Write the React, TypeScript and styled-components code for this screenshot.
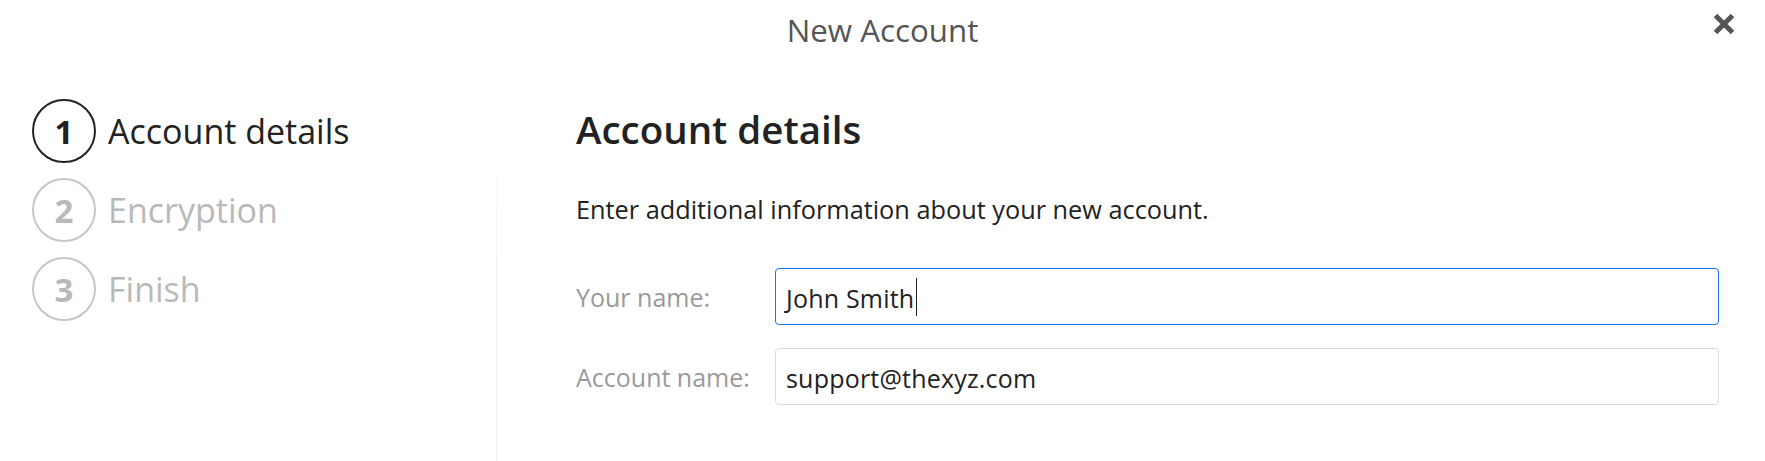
import React from "react";
import styled, { createGlobalStyle } from "styled-components";

const Global = createGlobalStyle`
  html, body { margin: 0; padding: 0; background: #ffffff; }
  body { font-family: "Open Sans", "Noto Sans", "Liberation Sans", sans-serif; color: #222; }
  * { box-sizing: border-box; }
`;

const Page = styled.div`
  width: 1765px;
  height: 461px;
  display: flex;
  flex-direction: column;
  background: #fff;
  overflow: hidden;
`;

const Header = styled.header`
  height: 60px;
  display: grid;
  grid-template-columns: 1fr auto 1fr;
  flex: none;
`;

const Title = styled.h1`
  grid-column: 2;
  margin: 0;
  font-size: 31.3px;
  font-weight: 400;
  line-height: 60px;
  color: #555;
`;

const CloseButton = styled.button`
  grid-column: 3;
  justify-self: end;
  align-self: start;
  margin: 13px 30px 0 0;
  padding: 0;
  width: 22px;
  height: 22px;
  border: none;
  background: transparent;
  display: flex;
  cursor: pointer;
`;

const Body = styled.div`
  flex: 1;
  display: grid;
  grid-template-columns: 497px 1fr;
`;

const Sidebar = styled.nav`
  padding: 39px 0 0 32px;
  display: flex;
  flex-direction: column;
  gap: 15px;
  background: linear-gradient(
      to bottom,
      rgba(240, 240, 240, 0) 0%,
      rgba(240, 240, 240, 0) 20%,
      #f1f1f1 50%,
      #f1f1f1 100%
    )
    right top / 1px 100% no-repeat;
`;

const Step = styled.div<{ $active?: boolean }>`
  display: flex;
  align-items: center;
  gap: 12px;
  height: 64px;
  color: ${(p) => (p.$active ? "#222" : "#b9b9b9")};
`;

const StepCircle = styled.span<{ $active?: boolean }>`
  width: 64px;
  height: 64px;
  border-radius: 50%;
  border: 2px solid ${(p) => (p.$active ? "#222" : "#c6c6c6")};
  display: flex;
  align-items: center;
  justify-content: center;
  font-size: 33px;
  font-weight: 700;
  line-height: 1;
  flex: none;
`;

const StepLabel = styled.span`
  font-size: 34px;
  line-height: 1.2;
`;

const Content = styled.main`
  padding: 46px 46px 0 79px;
  display: flex;
  flex-direction: column;
`;

const Heading = styled.h2`
  margin: 0;
  font-size: 38.5px;
  font-weight: 600;
  line-height: 46px;
  color: #222;
`;

const Description = styled.p`
  margin: 40px 0 0;
  font-size: 25.3px;
  line-height: 35px;
  color: #222;
`;

const Form = styled.div`
  margin-top: 41px;
  display: grid;
  grid-template-columns: 199px 1fr;
  grid-auto-rows: 57px;
  row-gap: 23px;
  align-items: center;
`;

const Label = styled.label`
  font-size: 25px;
  color: #9a9a9a;
`;

const Field = styled.div<{ $focused?: boolean }>`
  height: 57px;
  display: flex;
  align-items: center;
  padding: 3px 10px 0;
  border: 1px solid ${(p) => (p.$focused ? "#1a73e8" : "#dcdcdc")};
  border-radius: 4px;
  font-size: 25px;
  color: #222;
`;

const FieldText = styled.span`
  letter-spacing: 0.2px;
`;

const Caret = styled.span`
  display: inline-block;
  width: 1px;
  height: 38px;
  margin: -3px 0 0 2px;
  background: #222;
`;

const CloseIcon = () => (
  <svg width="22" height="22" viewBox="0 0 22 22" aria-hidden="true">
    <path d="M2.5 2.5 L19.5 19.5 M19.5 2.5 L2.5 19.5" stroke="#555" strokeWidth="5" fill="none" />
  </svg>
);

const steps = [
  { n: 1, label: "Account details", active: true },
  { n: 2, label: "Encryption", active: false },
  { n: 3, label: "Finish", active: false },
];

export default function App() {
  return (
    <Page>
      <Global />
      <Header>
        <Title>New Account</Title>
        <CloseButton aria-label="Close">
          <CloseIcon />
        </CloseButton>
      </Header>
      <Body>
        <Sidebar>
          {steps.map((s) => (
            <Step key={s.n} $active={s.active}>
              <StepCircle $active={s.active}>{s.n}</StepCircle>
              <StepLabel>{s.label}</StepLabel>
            </Step>
          ))}
        </Sidebar>
        <Content>
          <Heading>Account details</Heading>
          <Description>Enter additional information about your new account.</Description>
          <Form>
            <Label>Your name:</Label>
            <Field $focused>
              <FieldText>John Smith</FieldText>
              <Caret />
            </Field>
            <Label>Account name:</Label>
            <Field>
              <FieldText>support@thexyz.com</FieldText>
            </Field>
          </Form>
        </Content>
      </Body>
    </Page>
  );
}
